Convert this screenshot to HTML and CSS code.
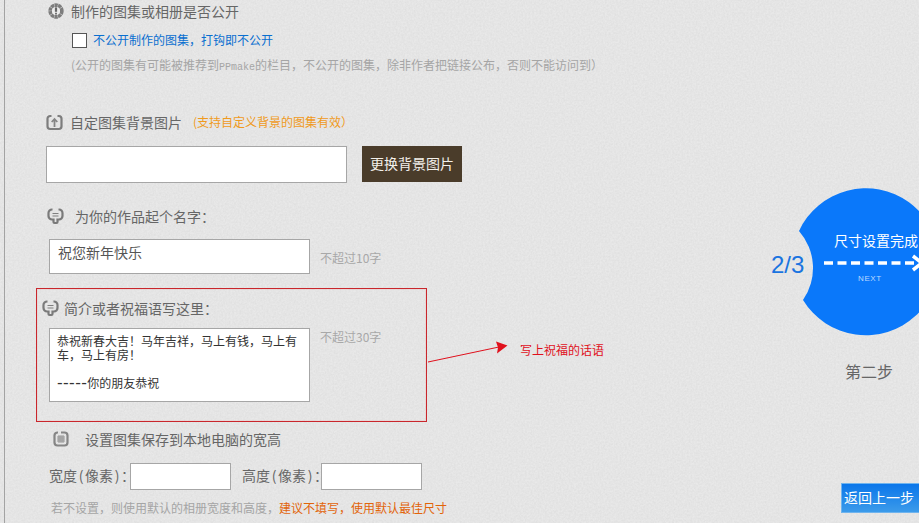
FILE: index.html
```html
<!DOCTYPE html>
<html lang="zh-CN">
<head>
<meta charset="utf-8">
<title>图集设置</title>
<link rel="stylesheet" href="styles.css">
</head>
<body>
<div class="page">
  <main class="main">
    <section class="sec-public">
      <h3 class="title title-a">
        <svg class="ico" width="16" height="16" viewBox="0 0 16 16"><circle cx="8" cy="8" r="5.800" fill="none" stroke="#7d7d7d" stroke-width="3.800" stroke-dasharray="3.200 .4"/><circle cx="8" cy="8" r="4" fill="#ececec"/><path d="M8 4.400v4.400" stroke="#666" stroke-width="2.200"/><path d="M8 9.800v1.800" stroke="#666" stroke-width="1.800"/></svg>
        <span>制作的图集或相册是否公开</span>
      </h3>
      <label class="check-row"><span class="check"></span><span class="blue">不公开制作的图集，打钩即不公开</span></label>
      <p class="hint hint-public">(公开的图集有可能被推荐到<span class="mono">PPmake</span>的栏目，不公开的图集，除非作者把链接公布，否则不能访问到）</p>
    </section>

    <section class="sec-bg">
      <h3 class="title title-b">
        <svg class="ico" width="17" height="17" viewBox="0 0 17 17"><path d="M5.500 2H4.200A2.700 2.700 0 0 0 1.500 4.700v7.600A2.700 2.700 0 0 0 4.200 15h8.600a2.700 2.700 0 0 0 2.700-2.700V4.700A2.700 2.700 0 0 0 12.800 2H11.500" fill="none" stroke="#7d7d7d" stroke-width="2.200"/><path d="M8.500 13V5.500M5.700 8l2.800-3 2.800 3" fill="none" stroke="#858585" stroke-width="1.800"/></svg>
        <span>自定图集背景图片</span><em class="orange">(支持自定义背景的图集有效）</em>
      </h3>
      <div class="bg-row">
        <input class="input input-bg" type="text" aria-label="背景图片">
        <button class="btn-brown" type="button">更换背景图片</button>
      </div>
    </section>

    <section class="sec-name">
      <h3 class="title title-c">
        <svg class="ico" width="17" height="17" viewBox="0 0 17 17"><path d="M5.500 1.500H5A3.500 3.500 0 0 0 1.500 5v3A3.500 3.500 0 0 0 5 11.500h1.500V14a1 1 0 0 0 1 1h2a1 1 0 0 0 1-1v-2.500H12A3.500 3.500 0 0 0 15.500 8V5A3.500 3.500 0 0 0 12 1.500h-.5" fill="none" stroke="#7a7a7a" stroke-width="2.200"/><path d="M5.500 5.500h6M5.500 8h6" stroke="#808080" stroke-width="1.200"/></svg>
        <span>为你的作品起个名字：</span>
      </h3>
      <div class="name-row">
        <div class="field field-name">祝您新年快乐</div>
        <span class="limit limit-name">不超过10字</span>
      </div>
    </section>

    <section class="sec-intro">
      <h3 class="title title-d">
        <svg class="ico" width="17" height="17" viewBox="0 0 17 17"><path d="M5.500 1.500H5A3.500 3.500 0 0 0 1.500 5v3A3.500 3.500 0 0 0 5 11.500h1.500V14a1 1 0 0 0 1 1h2a1 1 0 0 0 1-1v-2.500H12A3.500 3.500 0 0 0 15.500 8V5A3.500 3.500 0 0 0 12 1.500h-.5" fill="none" stroke="#7a7a7a" stroke-width="2.200"/><path d="M5.500 5.500h6M5.500 8h6" stroke="#808080" stroke-width="1.200"/></svg>
        <span>简介或者祝福语写这里：</span>
      </h3>
      <div class="intro-row">
        <div class="field field-intro">恭祝新春大吉！马年吉祥，马上有钱，马上有车，马上有房！<br><br><span class="dashes">-----</span>你的朋友恭祝</div>
        <span class="limit">不超过30字</span>
      </div>
      <svg class="note-arrow" width="84" height="24" viewBox="0 0 84 24"><path d="M1 22L72 7" stroke="#e0101c" stroke-width="1"/><path d="M80.500 5.500L69 1.500l2 6-1 6z" fill="#e0101c"/></svg>
      <span class="note">写上祝福的话语</span>
    </section>

    <section class="sec-size">
      <h3 class="title title-e">
        <svg class="ico" width="16" height="16" viewBox="0 0 16 16"><path d="M5 1.500H4.500a3 3 0 0 0-3 3v7a3 3 0 0 0 3 3h7a3 3 0 0 0 3-3v-7a3 3 0 0 0-3-3H8" fill="none" stroke="#858585" stroke-width="2.200"/><path d="M5 5h6v6H5zM5 7h6M5 9h6M7 5v6M9 5v6" fill="none" stroke="#808080" stroke-width=".8"/></svg>
        <span>设置图集保存到本地电脑的宽高</span>
      </h3>
      <div class="size-row">
        <span class="size-label">宽度<i class="paren">(</i>像素<i class="paren">)</i>：</span><input class="input input-size" type="text" aria-label="宽度">
        <span class="size-label size-label-2">高度<i class="paren">(</i>像素<i class="paren">)</i>：</span><input class="input input-size" type="text" aria-label="高度">
      </div>
      <p class="hint hint-size">若不设置，则使用默认的相册宽度和高度，<b class="warn">建议不填写，使用默认最佳尺寸</b></p>
    </section>
  </main>

  <aside class="aside">
    <div class="step-row">
      <span class="step-num">2/3</span>
      <div class="disc">
        <svg class="disc-svg" width="150" height="150" viewBox="0 0 150 150"><path d="M9 43A73.500 73.500 0 1 1 13 112A56 56 0 0 0 9 43Z" fill="#0a78fa"/><path d="M34 75H128" stroke="#fff" stroke-width="3.500" stroke-dasharray="9 4.500"/><path d="M123 68l9 7-9 7" fill="none" stroke="#fff" stroke-width="3.500"/></svg>
        <span class="disc-text">尺寸设置完成</span>
        <span class="disc-next">NEXT</span>
      </div>
    </div>
    <p class="step-label">第二步</p>
  </aside>
</div>
<a class="back" href="#">返回上一步</a>
</body>
</html>
```
FILE: styles.css
```css
* { box-sizing: border-box; }
html, body { margin: 0; height: 100%; overflow: hidden; }
body {
  font-family: "Noto Sans CJK SC", "Liberation Sans", sans-serif;
  font-size: 14px;
  color: #666;
  background-color: #e9e9e9;
  background-image: url("data:image/svg+xml,%3Csvg xmlns='http://www.w3.org/2000/svg' width='300' height='300'%3E%3Cfilter id='n'%3E%3CfeTurbulence type='fractalNoise' baseFrequency='.55' numOctaves='2' seed='4'/%3E%3CfeColorMatrix values='0 0 0 0 .45 0 0 0 0 .45 0 0 0 0 .45 .28 0 0 0 -.06'/%3E%3C/filter%3E%3Crect width='300' height='300' filter='url(%23n)'/%3E%3C/svg%3E");
}
.page {
  display: flex;
  width: 1100px;
  height: 523px;
  margin-left: 4px;
  border-left: 1px solid #a3a3a3;
}
.main { width: 766px; flex: none; position: relative; }
h3, p { margin: 0; font-weight: normal; }
em, b, i { font-style: normal; font-weight: normal; }

.title { display: flex; align-items: center; height: 24px; padding-bottom: 2px; line-height: 22px; font-size: 14px; color: #666; }
.ico { flex: none; display: block; }
.title-a { padding-left: 43px; gap: 7px; }
.title-b { padding-left: 41px; gap: 7px; margin-top: 37px; }
.title-c { padding-left: 42px; gap: 11px; margin-top: 22px; }
.title-d { padding-left: 5px; gap: 5px; margin-top: 0; }
.title-e { padding-left: 48px; gap: 16px; margin-top: 6px; }

.check-row { display: flex; align-items: flex-start; margin: 8px 0 0 67px; height: 18px; }
.check { width: 15px; height: 15px; margin: 1px 6px 0 0; background: #fff; border: 1px solid #555; }
.blue { font-size: 12px; line-height: 16px; color: #0a6fd0; }
.hint { font-size: 12px; line-height: 18px; color: #a5a5a5; }
.hint-public { height: 18px; margin: 6px 0 0 66px; }
.mono { font-family: "Liberation Mono", monospace; font-size: 10px; line-height: 0; }
.orange { font-size: 12px; color: #f09a1c; margin-left: 4px; }

.input { display: block; background: #fff; border: 1px solid #a6a6a6; padding: 0; margin: 0; border-radius: 0; outline: none; }
.bg-row { display: flex; align-items: flex-start; margin: 11px 0 0 41px; }
.input-bg { width: 301px; height: 37px; }
.btn-brown { width: 100px; height: 36px; margin-left: 15px; padding: 0 0 3px; background: #4a3c2a; color: #f3f0ea; border: 0; font: inherit; font-size: 14px; }

.field { background: #fff; border: 1px solid #a6a6a6; width: 261px; flex: none; }
.name-row { display: flex; align-items: flex-start; margin: 10px 0 0 44px; }
.field-name { height: 35px; padding-left: 8px; line-height: 24px; font-size: 14px; color: #555; }
.limit { font-size: 12px; line-height: 18px; color: #a8a8a8; margin-left: 10px; }
.limit-name { margin-top: 10px; }

.sec-intro { position: relative; width: 391px; height: 134px; margin: 14px 0 0 31px; padding-top: 8px; border: 1px solid #c9262c; box-shadow: inset 0 0 0 1px rgba(255, 60, 60, .08); }
.intro-row { display: flex; align-items: flex-start; margin: 7px 0 0 12px; }
.field-intro { height: 74px; padding: 5px 11px 0 7px; font-size: 12px; line-height: 14px; color: #333; }
.dashes { font-family: "Liberation Sans", sans-serif; font-size: 17px; line-height: 0; letter-spacing: .4px; }
.note-arrow { position: absolute; left: 390px; top: 51px; }
.note { position: absolute; left: 483px; top: 52px; font-size: 12px; line-height: 18px; color: #e0101c; white-space: nowrap; }

.size-row { display: flex; align-items: center; margin: 11px 0 0 44px; height: 27px; font-size: 14px; color: #666; }
.size-label { width: 81px; flex: none; white-space: nowrap; line-height: 20px; padding-bottom: 3px; }
.size-label-2 { width: 79px; margin-left: 11px; }
.paren { display: inline-block; width: 8px; text-align: center; }
.input-size { width: 101px; height: 27px; }
.hint-size { margin: 9px 0 0 46px; }
.warn { color: #e2640a; }

.aside { width: 200px; flex: none; padding-top: 188px; }
.step-row { display: flex; align-items: flex-start; }
.step-num { width: 19px; margin-top: 62px; font: 24px/30px "Liberation Sans", sans-serif; color: #1a74e0; white-space: nowrap; }
.disc { position: relative; width: 150px; height: 150px; flex: none; }
.disc-svg { display: block; }
.disc-text { position: absolute; left: 44px; top: 42px; font-size: 14px; line-height: 20px; color: #fff; white-space: nowrap; }
.disc-next { position: absolute; left: 68px; top: 86px; font: 8px/10px "Liberation Sans", sans-serif; letter-spacing: .6px; color: #bcd9ff; }
.step-label { margin: 22px 0 0 74px; font-size: 16px; line-height: 22px; color: #666; }

.back {
  position: fixed; right: 0; bottom: 10px; width: 78px; height: 30px;
  background: linear-gradient(#0a76ea, #3c9bea);
  border: 1px solid #6fb4ee; border-right: 0;
  color: #fff; font-size: 14px; line-height: 26px; padding-left: 2px; text-decoration: none;
}
```
